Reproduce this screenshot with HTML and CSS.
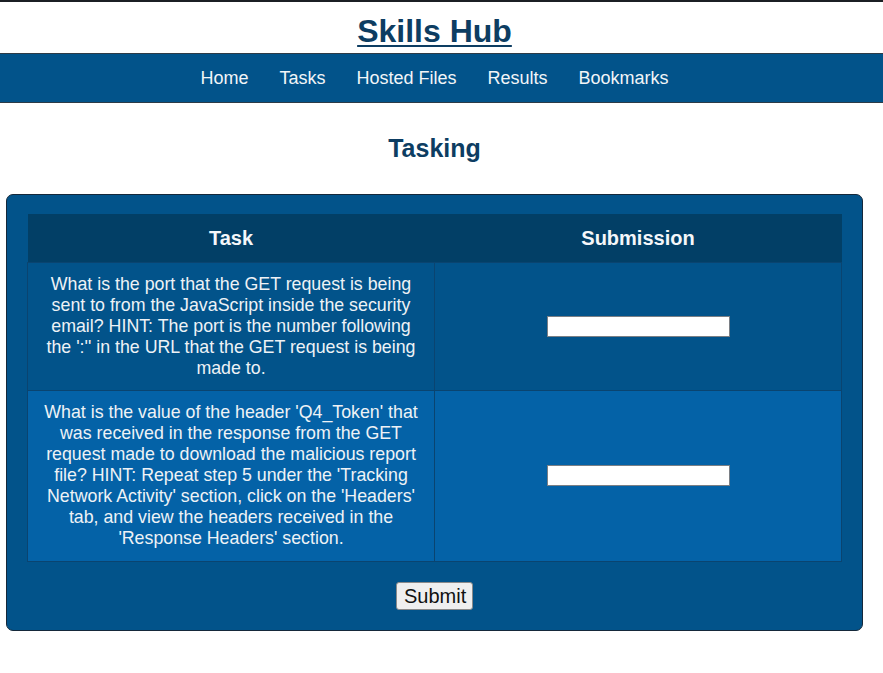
FILE: index.html
```html
<!DOCTYPE html>
<html>
<head>
<meta charset="utf-8">
<title>Skills Hub</title>
<link rel="stylesheet" href="styles.css">
</head>
<body>
<header class="site-header">
  <h1 class="site-title"><a href="#">Skills Hub</a></h1>
</header>
<nav class="main-nav">
  <a href="#">Home</a>
  <a href="#">Tasks</a>
  <a href="#">Hosted Files</a>
  <a href="#">Results</a>
  <a href="#">Bookmarks</a>
</nav>
<main class="content">
  <h2 class="page-title">Tasking</h2>
  <form class="panel">
    <table class="task-table">
      <thead>
        <tr><th>Task</th><th>Submission</th></tr>
      </thead>
      <tbody>
        <tr class="row-a">
          <td>What is the port that the GET request is being sent to from the JavaScript inside the security email? HINT: The port is the number following the ':'' in the URL that the GET request is being made to.</td>
          <td><input type="text" class="answer"></td>
        </tr>
        <tr class="row-b">
          <td>What is the value of the header 'Q4_Token' that was received in the response from the GET request made to download the malicious report file? HINT: Repeat step 5 under the 'Tracking Network Activity' section, click on the 'Headers' tab, and view the headers received in the 'Response Headers' section.</td>
          <td><input type="text" class="answer"></td>
        </tr>
      </tbody>
    </table>
    <div class="actions">
      <button type="button" class="submit-btn">Submit</button>
    </div>
  </form>
</main>
</body>
</html>
```
FILE: styles.css
```css
* { box-sizing: border-box; }
html, body { margin: 0; padding: 0; background: #ffffff; }
body {
  font-family: "Liberation Sans", Arial, sans-serif;
  border-top: 2px solid #1b1f24;
}
.site-header {
  height: 51px;
  text-align: center;
  padding: 11px 14px 0 0;
}
.site-title {
  margin: 0;
  font-size: 32px;
  line-height: 37px;
  font-weight: bold;
}
.site-title a {
  color: #0d3d62;
  text-decoration: underline;
  text-decoration-thickness: 2px;
  text-underline-offset: 3px;
}
.main-nav {
  background: #02538a;
  border-top: 1px solid #2d3b47;
  border-bottom: 1px solid #2d3b47;
  height: 50px;
  display: flex;
  justify-content: center;
  align-items: center;
  gap: 31px;
  padding-right: 14px;
}
.main-nav a {
  color: #f2f5f8;
  text-decoration: none;
  font-size: 18px;
  line-height: 21px;
}
.content {
  padding: 0 20px 0 6px;
}
.page-title {
  margin: 0;
  padding-top: 31px;
  height: 91px;
  text-align: center;
  color: #0d3d62;
  font-size: 25px;
  line-height: 29px;
  font-weight: bold;
}
.panel {
  display: block;
  background: #02538a;
  border: 1px solid #15283a;
  border-radius: 7px;
  padding: 19px 20px 20px 20px;
  margin: 0;
}
.task-table {
  width: 100%;
  border-collapse: collapse;
  table-layout: fixed;
  color: #eef2f6;
}
.task-table th {
  background: #023f66;
  color: #f4f7fa;
  font-size: 20px;
  line-height: 23px;
  font-weight: bold;
  padding: 13px 10px 12px;
  text-align: center;
}
.task-table td {
  border: 1px solid #0a4470;
  font-size: 17.8px;
  line-height: 21px;
  text-align: center;
  vertical-align: middle;
  padding: 11px 15px 11px;
}
.row-a td { background: #02538a; }
.row-b td { background: #0462a7; padding-bottom: 12px; }
.answer {
  width: 183px;
  height: 21px;
  border: 1px solid #7a7f85;
  border-radius: 0;
  background: #ffffff;
  padding: 0 4px;
  display: inline-block;
  vertical-align: middle;
}
.actions {
  display: flex;
  justify-content: center;
  padding-top: 20px;
}
.submit-btn {
  font-family: "Liberation Sans", Arial, sans-serif;
  font-size: 20px;
  line-height: 22px;
  padding: 2px 7px;
  height: 28px;
  width: 77px;
  color: #111;
  background: #efefef;
  border: 1px solid #8a8a8a;
  border-radius: 3px;
}
```
